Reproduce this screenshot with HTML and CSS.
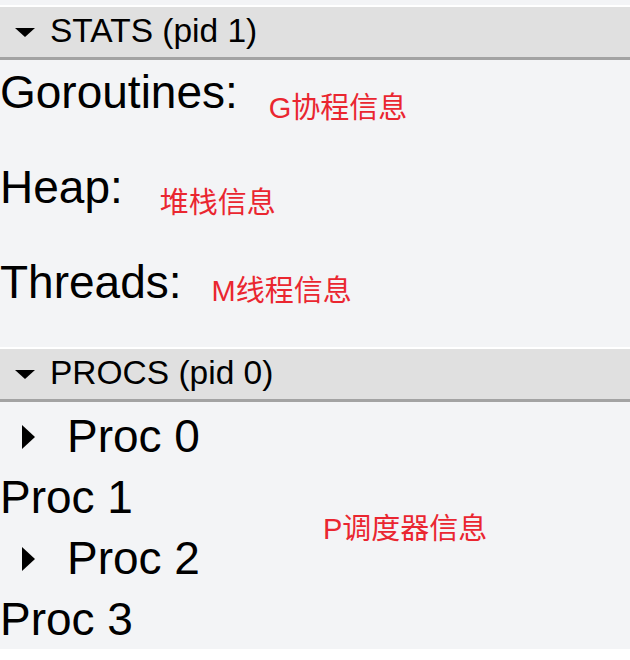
FILE: index.html
```html
<!DOCTYPE html>
<html lang="zh">
<head>
<meta charset="utf-8">
<title>Trace</title>
<link rel="stylesheet" href="styles.css">
</head>
<body>
<div class="prev"></div>

<section class="panel">
  <div class="header"><span class="caret-down"></span><span class="title">STATS (pid 1)</span></div>
  <div class="content stats">
    <div class="row">Goroutines:<span class="note note-g">G协程信息</span></div>
    <div class="row">Heap:<span class="note note-h">堆栈信息</span></div>
    <div class="row">Threads:<span class="note note-m">M线程信息</span></div>
  </div>
</section>

<section class="panel">
  <div class="header"><span class="caret-down"></span><span class="title">PROCS (pid 0)</span></div>
  <div class="content procs">
    <div class="proc expandable"><span class="caret-right"></span>Proc 0</div>
    <div class="proc">Proc 1</div>
    <div class="proc expandable"><span class="caret-right"></span>Proc 2</div>
    <div class="proc">Proc 3</div>
    <span class="note note-p">P调度器信息</span>
  </div>
</section>
</body>
</html>
```

FILE: styles.css
```css
* { box-sizing: border-box; }

html, body {
  margin: 0;
  padding: 0;
  background: #ffffff;
}

body {
  font-family: "Liberation Sans", Arial, "Noto Sans CJK SC", sans-serif;
  color: #000;
  width: 630px;
  height: 660px;
  overflow: hidden;
}

.prev {
  height: 5px;
  background: #f3f4f6;
}

.panel {
  margin-top: 2px;
}

.header {
  height: 50px;
  background: #e0e0e0;
  border-bottom: 3px solid #a3a3a3;
  display: flex;
  align-items: center;
  padding-left: 15px;
  box-sizing: content-box;
}

.title {
  font-size: 33.5px;
  line-height: 1;
  margin-top: -3px;
}

.caret-down {
  width: 0;
  height: 0;
  border-left: 10px solid transparent;
  border-right: 10px solid transparent;
  border-top: 9px solid #000;
  margin-right: 15px;
  margin-top: 1px;
}

.content {
  background: #f3f4f6;
  position: relative;
}

.stats {
  padding: 6px 0 39px 0;
  font-size: 46px;
  line-height: 52px;
}

.stats .row {
  height: 52px;
  white-space: nowrap;
}

.stats .row + .row {
  margin-top: 43px;
}

.note {
  font-family: "Liberation Sans", Arial, "Noto Sans CJK SC", sans-serif;
  font-size: 29px;
  line-height: 1;
  color: #ea2630;
}

.note-g { margin-left: 31px; vertical-align: -10px; }
.note-h { margin-left: 37px; vertical-align: -10px; }
.note-m { margin-left: 30px; vertical-align: -3px; }

.procs {
  padding: 4px 0 0 0;
  height: 247px;
  font-size: 46px;
}

.proc {
  height: 61px;
  line-height: 61px;
  display: flex;
  align-items: center;
  white-space: nowrap;
}

.proc.expandable {
  padding-left: 22px;
}

.caret-right {
  width: 0;
  height: 0;
  border-top: 12px solid transparent;
  border-bottom: 12px solid transparent;
  border-left: 13px solid #000;
  margin-right: 32px;
}

.note-p {
  position: absolute;
  left: 323px;
  top: 113px;
}
```
